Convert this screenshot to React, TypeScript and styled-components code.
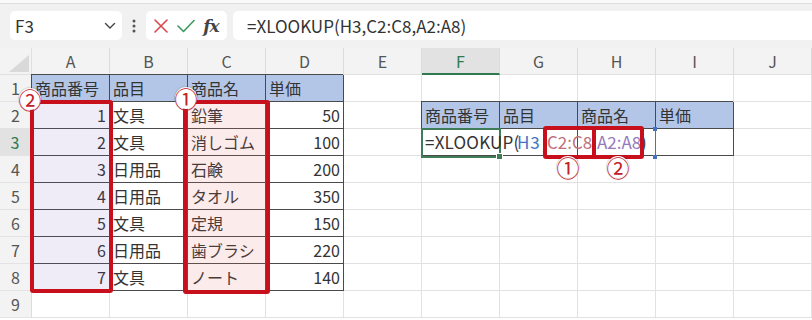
import React from 'react';
import styled, { createGlobalStyle, css } from 'styled-components';

const GlobalStyle = createGlobalStyle`
  html, body { margin: 0; padding: 0; background: #fff; }
  body {
    width: 812px; height: 320px; overflow: hidden;
    font-family: "Noto Sans CJK JP", "Noto Sans", sans-serif;
  }
`;

const FONT = `"Noto Sans CJK JP", "Noto Sans", sans-serif`;

const Toolbar = styled.div`
  height: 48px;
  box-sizing: border-box;
  display: flex;
  align-items: flex-start;
  padding: 11px 0 0 10px;
  background: linear-gradient(#fafafa 0 3px, #dedede 3px 4px, #f1f1f1 4px);
`;

const NameBox = styled.div`
  width: 112px;
  height: 29px;
  box-sizing: border-box;
  background: #fff;
  border-radius: 5px;
  display: flex;
  align-items: center;
  justify-content: space-between;
  padding: 0 6px 0 5px;
  font: 17px ${FONT};
  color: #333;
`;

const Kebab = styled.div`
  width: 24px;
  height: 29px;
  display: flex;
  align-items: center;
  justify-content: center;
`;

const ActionBox = styled.div`
  width: 81px;
  height: 29px;
  box-sizing: border-box;
  background: #fff;
  border-radius: 5px;
  display: flex;
  align-items: center;
  justify-content: space-around;
  padding: 0 4px;
`;

const Fx = styled.span`
  font: italic bold 17px "DejaVu Serif", "Liberation Serif", serif;
  color: #444;
  letter-spacing: -1px;
`;

const FormulaBox = styled.div`
  flex: 1;
  height: 29px;
  margin-left: 6px;
  box-sizing: border-box;
  background: #fff;
  border-radius: 5px 0 0 5px;
  display: flex;
  align-items: center;
  padding-left: 14px;
  font: 17px ${FONT};
  color: #333;
`;

const Sheet = styled.div`
  position: relative;
  display: grid;
  grid-template-columns: 32px repeat(10, 78px);
  grid-auto-rows: 27px;
`;

const Corner = styled.div`
  background: #f3f3f3;
  border-bottom: 1px solid #e0e0e0;
  border-right: 1px solid #e0e0e0;
  display: flex;
  align-items: flex-end;
  justify-content: flex-end;
  padding: 0 2px 2px 0;
`;

const ColHead = styled.div<{ $active?: boolean }>`
  box-sizing: border-box;
  background: ${p => (p.$active ? '#e2e2e2' : '#f3f3f3')};
  border-right: 1px solid #dcdcdc;
  border-bottom: ${p => (p.$active ? '2px solid #2f7a4f' : '1px solid #e0e0e0')};
  color: ${p => (p.$active ? '#2f7a4f' : '#555')};
  font: 16px ${FONT};
  line-height: 26px;
  text-align: center;
`;

const RowHead = styled.div<{ $active?: boolean }>`
  box-sizing: border-box;
  background: ${p => (p.$active ? '#e2e2e2' : '#f3f3f3')};
  border-bottom: 1px solid #e3e3e3;
  border-right: ${p => (p.$active ? '2px solid #2f7a4f' : '1px solid #dcdcdc')};
  color: ${p => (p.$active ? '#2f7a4f' : '#555')};
  font: 16px ${FONT};
  line-height: 26px;
  text-align: center;
`;

type Kind = 'plain' | 'head' | 'data';

const Cell = styled.div<{ $kind: Kind; $align?: 'left' | 'right'; $noRight?: boolean }>`
  box-sizing: border-box;
  min-width: 0;
  padding: 0 3px;
  font: 16px ${FONT};
  line-height: 26px;
  color: #333;
  white-space: nowrap;
  text-align: ${p => p.$align ?? 'left'};
  border-right: 1px solid ${p => (p.$noRight ? 'transparent' : p.$kind === 'plain' ? '#e1e1e1' : '#4a4a4a')};
  border-bottom: 1px solid ${p => (p.$kind === 'plain' ? '#e1e1e1' : '#4a4a4a')};
  background: ${p => (p.$kind === 'head' ? '#b4c6e7' : p.$kind === 'data' ? '#fff' : 'transparent')};
  ${p =>
    p.$kind !== 'plain' &&
    css`
      box-shadow: -1px -1px 0 0 #4a4a4a;
    `}
`;

const Overflow = styled.span`
  position: relative;
  z-index: 2;
  display: inline-flex;
  font-size: 17px;
`;

const Token = styled.span<{ $w: number; $c?: string; $ls?: number }>`
  display: inline-block;
  flex: none;
  width: ${p => p.$w}px;
  color: ${p => p.$c ?? 'inherit'};
  letter-spacing: ${p => p.$ls ?? 0}px;
`;

const RedBox = styled.div<{ $fill?: string }>`
  position: absolute;
  z-index: 3;
  box-sizing: border-box;
  border: 4px solid #c8101c;
  border-radius: 3px;
  background: ${p => p.$fill ?? 'transparent'};
`;

const Badge = styled.div`
  position: absolute;
  z-index: 4;
  width: 22px;
  height: 22px;
  margin: -11px 0 0 -11px;
  border-radius: 50%;
  background: #fff;
  box-shadow: 0 0 1px 1px rgba(0, 0, 0, 0.12);
  display: flex;
  align-items: center;
  justify-content: center;
  font: 23px ${FONT};
  line-height: 1;
  color: #c4202a;
`;

const Selection = styled.div`
  position: absolute;
  z-index: 1;
  box-sizing: border-box;
  border: 2px solid #3f7d58;
  &::after {
    content: '';
    position: absolute;
    right: -4px;
    bottom: -4px;
    width: 5px;
    height: 5px;
    background: #3f7d58;
    border: 1px solid #fff;
  }
`;

const RangeMark = styled.div`
  position: absolute;
  z-index: 2;
  width: 2px;
  box-sizing: border-box;
  border-right: 1px solid #4472c4;
  &::before,
  &::after {
    content: '';
    position: absolute;
    left: -1px;
    width: 4px;
    height: 4px;
    background: #4472c4;
  }
  &::before { top: -2px; }
  &::after { bottom: -2px; }
`;

type CellDef = { t: React.ReactNode; kind: Kind; align?: 'left' | 'right'; noRight?: boolean };

const COLS = ['A', 'B', 'C', 'D', 'E', 'F', 'G', 'H', 'I', 'J'];

const table1: (string | number)[][] = [
  ['商品番号', '品目', '商品名', '単価'],
  [1, '文具', '鉛筆', 50],
  [2, '文具', '消しゴム', 100],
  [3, '日用品', '石鹸', 200],
  [4, '日用品', 'タオル', 350],
  [5, '文具', '定規', 150],
  [6, '日用品', '歯ブラシ', 220],
  [7, '文具', 'ノート', 140],
];

const formula = (
  <Overflow>
    <Token $w={92} $ls={0.2}>=XLOOKUP(</Token>
    <Token $w={25} $c="#4472c4" $ls={0.8}>H3</Token>
    <Token $w={5}>,</Token>
    <Token $w={45} $c="#c0707a">C2:C8</Token>
    <Token $w={5}>,</Token>
    <Token $w={44} $c="#9479bd">A2:A8</Token>
    <Token $w={8}>)</Token>
  </Overflow>
);

function cellAt(r: number, c: number): CellDef {
  if (r >= 1 && r <= 8 && c <= 3) {
    const v = table1[r - 1][c];
    return { t: v, kind: r === 1 ? 'head' : 'data', align: typeof v === 'number' ? 'right' : 'left' };
  }
  if (r === 2 && c >= 5 && c <= 8) {
    return { t: table1[0][c - 5], kind: 'head' };
  }
  if (r === 3 && c >= 5 && c <= 8) {
    return { t: c === 5 ? formula : '', kind: 'data', noRight: c === 5 || c === 6 || c === 7 };
  }
  return { t: '', kind: 'plain' };
}

const Chevron = () => (
  <svg width="12" height="8" viewBox="0 0 12 8">
    <path d="M1.5 1.5 L6 6 L10.5 1.5" fill="none" stroke="#444" strokeWidth="1.4" strokeLinecap="round" />
  </svg>
);

const Dots = () => (
  <svg width="4" height="14" viewBox="0 0 4 14">
    <circle cx="2" cy="2" r="1.5" fill="#555" />
    <circle cx="2" cy="7" r="1.5" fill="#555" />
    <circle cx="2" cy="12" r="1.5" fill="#555" />
  </svg>
);

const Cross = () => (
  <svg width="14" height="14" viewBox="0 0 14 14">
    <path d="M1 1 L13 13 M13 1 L1 13" stroke="#d8474a" strokeWidth="1.6" strokeLinecap="round" />
  </svg>
);

const Check = () => (
  <svg width="18" height="14" viewBox="0 0 18 14">
    <path d="M1 7 L6.5 12.5 L17 1.5" fill="none" stroke="#3c9a5f" strokeWidth="1.6" strokeLinecap="round" strokeLinejoin="round" />
  </svg>
);

const SelectAll = () => (
  <svg width="20" height="17" viewBox="0 0 20 17">
    <polygon points="20,0 20,17 0,17" fill="#d9d9d9" />
  </svg>
);

export default function App() {
  const rows = Array.from({ length: 9 }, (_, i) => i + 1);
  return (
    <>
      <GlobalStyle />
      <Toolbar>
        <NameBox>
          <span>F3</span>
          <Chevron />
        </NameBox>
        <Kebab>
          <Dots />
        </Kebab>
        <ActionBox>
          <Cross />
          <Check />
          <Fx>fx</Fx>
        </ActionBox>
        <FormulaBox>=XLOOKUP(H3,C2:C8,A2:A8)</FormulaBox>
      </Toolbar>
      <Sheet>
        <Corner>
          <SelectAll />
        </Corner>
        {COLS.map(c => (
          <ColHead key={c} $active={c === 'F'}>
            {c}
          </ColHead>
        ))}
        {rows.map(r => (
          <React.Fragment key={r}>
            <RowHead $active={r === 3}>{r}</RowHead>
            {COLS.map((_, c) => {
              const d = cellAt(r, c);
              return (
                <Cell key={c} $kind={d.kind} $align={d.align} $noRight={d.noRight}>
                  {d.t}
                </Cell>
              );
            })}
          </React.Fragment>
        ))}

        <Selection style={{ left: 421, top: 80, width: 80, height: 30 }} />
        <RangeMark style={{ left: 654, top: 81, height: 28 }} />

        <RedBox $fill="rgba(120, 100, 200, 0.12)" style={{ left: 30, top: 52, width: 83, height: 193 }} />
        <RedBox $fill="rgba(230, 110, 110, 0.14)" style={{ left: 183, top: 52, width: 87, height: 194 }} />
        <RedBox style={{ left: 543, top: 78, width: 53, height: 33 }} />
        <RedBox style={{ left: 592, top: 78, width: 52, height: 33 }} />

        <Badge style={{ left: 30, top: 51 }}>②</Badge>
        <Badge style={{ left: 186, top: 50 }}>①</Badge>
        <Badge style={{ left: 568, top: 119 }}>①</Badge>
        <Badge style={{ left: 618, top: 119 }}>②</Badge>
      </Sheet>
    </>
  );
}
